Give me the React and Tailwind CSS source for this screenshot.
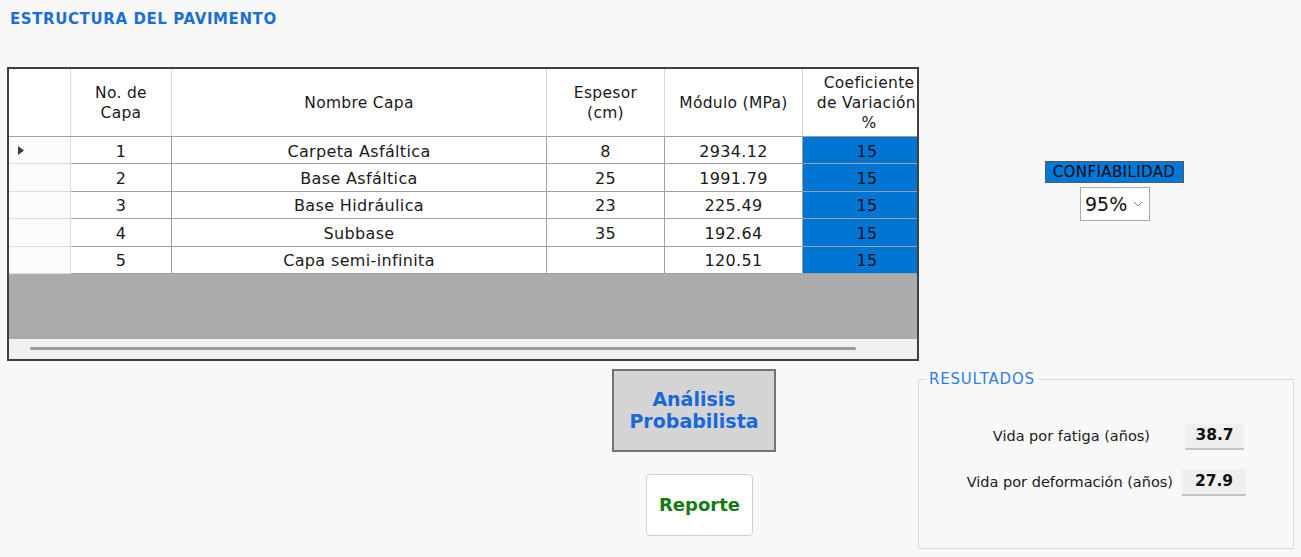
import React from 'react';

const rows = [
  { no: 1, nombre: 'Carpeta Asfáltica', espesor: '8', modulo: '2934.12', cv: '15' },
  { no: 2, nombre: 'Base Asfáltica', espesor: '25', modulo: '1991.79', cv: '15' },
  { no: 3, nombre: 'Base Hidráulica', espesor: '23', modulo: '225.49', cv: '15' },
  { no: 4, nombre: 'Subbase', espesor: '35', modulo: '192.64', cv: '15' },
  { no: 5, nombre: 'Capa semi-infinita', espesor: '', modulo: '120.51', cv: '15' },
];

function Grid() {
  return (
    <div className="w-[912px] border-2 border-[#3f3f3f] bg-white">
      {/* header */}
      <div className="flex h-[68px] border-b border-[#a0a0a0] text-[15.5px] leading-[20px] tracking-[0.3px] text-[#1a1a1a]">
        <div className="w-[62px] border-r border-[#d8d8d8]" />
        <div className="w-[101px] border-r border-[#d8d8d8] flex items-center justify-center text-center">No. de<br />Capa</div>
        <div className="w-[375px] border-r border-[#d8d8d8] flex items-center justify-center">Nombre Capa</div>
        <div className="w-[118px] border-r border-[#d8d8d8] flex items-center justify-center text-center">Espesor<br />(cm)</div>
        <div className="w-[138px] border-r border-[#d8d8d8] flex items-center justify-center">Módulo (MPa)</div>
        {/* column is clipped by the grid edge, as in the original control */}
        <div className="w-[114px] overflow-hidden flex items-center">
          <div className="w-[132px] shrink-0 text-center">Coeficiente<br />de Variación,<br />%</div>
        </div>
      </div>
      {rows.map((r) => (
        <div key={r.no} className="flex h-[27.4px] text-[16px] tracking-[0.35px] leading-[20px] text-[#1a1a1a]">
          <div className="w-[62px] border-b border-r border-[#dcdcdc] bg-[#fbfbfb] flex items-center pl-[9px]">
            {r.no === 1 && (
              <svg width="6" height="9" viewBox="0 0 6 9"><path d="M0 0 L6 4.5 L0 9 Z" fill="#3a3a3a" /></svg>
            )}
          </div>
          <div className="w-[101px] border-b border-r border-[#a0a0a0] flex items-center justify-center pt-[3px]">{r.no}</div>
          <div className="w-[375px] border-b border-r border-[#a0a0a0] flex items-center justify-center pt-[3px]">{r.nombre}</div>
          <div className="w-[118px] border-b border-r border-[#a0a0a0] flex items-center justify-center pt-[3px]">{r.espesor}</div>
          <div className="w-[138px] border-b border-r border-[#a0a0a0] flex items-center justify-center pt-[3px]">{r.modulo}</div>
          <div className="w-[114px] border-b border-[#a0a0a0] bg-[#0075d3] flex items-center justify-center pr-[14px] pt-[3px] text-[#111]">
            <span className="pl-[28px]">{r.cv}</span>
          </div>
        </div>
      ))}
      <div className="h-[66px] bg-[#ababab] -mt-px" />
      <div className="h-[20px] bg-[#f0f0f0] flex items-center pl-[21px]">
        <div className="w-[826px] h-[3px] bg-[#9a9a9a] rounded-full" />
      </div>
    </div>
  );
}

export default function App() {
  return (
    <div className="w-[1301px] h-[557px] bg-[#f8f8f8] relative overflow-hidden" style={{ fontFamily: '"DejaVu Sans", Verdana, sans-serif' }}>
      <div className="pt-[9px] pl-[10px] text-[15px] leading-[20px] font-bold text-[#1a6fd6] tracking-[0.6px]">ESTRUCTURA DEL PAVIMENTO</div>
      <div className="flex pl-[7px] pt-[38px]">
        <div className="flex flex-col">
          <Grid />
          <div className="flex flex-col items-start pl-[605px]">
            <button type="button" className="mt-[8px] w-[164px] h-[83px] bg-[#d4d4d4] border-2 border-[#727272] text-[#1769d9] font-bold text-[19px] leading-[22px]">
              Análisis<br />Probabilista
            </button>
            <button type="button" className="mt-[22px] ml-[34px] w-[107px] h-[62px] bg-white border border-[#cfcfcf] rounded-[4px] text-[#157a13] font-bold text-[18px]">
              Reporte
            </button>
          </div>
        </div>
        <div className="flex flex-col">
          <div className="flex flex-col items-center w-[376px] pt-[94px]">
            <div className="ml-[14px] w-[139px] h-[22px] bg-[#0078d7] border border-[#5a5a5a] text-[15px] tracking-[0.4px] leading-[20px] text-[#0a0a0a] text-center">CONFIABILIDAD</div>
            <div className="ml-[16px] mt-[4px] w-[70px] h-[34px] bg-white border border-[#a8a8a8] flex items-center pl-[4px] text-[19px] text-[#111]">
              <span>95%</span>
              <svg className="ml-[6px]" width="10" height="6" viewBox="0 0 10 6"><path d="M1 1 L5 5 L9 1" stroke="#8a8a8a" strokeWidth="1" fill="none" /></svg>
            </div>
          </div>
          <fieldset className="mt-[158px] -ml-[1px] w-[376px] h-[170px] border border-[#dadada] relative">
            <div className="absolute -top-[10px] left-[7px] px-[3px] bg-[#f8f8f8] text-[15px] tracking-[0.8px] text-[#2f7de6] leading-[18px]">RESULTADOS</div>
            <div className="flex flex-col pt-[43px] text-[14.5px] text-[#1a1a1a]">
              <div className="flex items-center h-[27px]">
                <div className="w-[231px] text-right">Vida por fatiga (años)</div>
                <div className="ml-[35px] w-[59px] h-[27px] bg-[#efefef] border-b-2 border-[#c4c4c4] border-t border-t-[#fafafa] flex items-center justify-center font-bold text-[15.5px] text-[#111]">38.7</div>
              </div>
              <div className="flex items-center h-[27px] mt-[19px]">
                <div className="w-[254px] text-right">Vida por deformación (años)</div>
                <div className="ml-[9px] w-[64px] h-[27px] bg-[#efefef] border-b-2 border-[#c4c4c4] flex items-center justify-center font-bold text-[15.5px] text-[#111]">27.9</div>
              </div>
            </div>
          </fieldset>
        </div>
      </div>
    </div>
  );
}
